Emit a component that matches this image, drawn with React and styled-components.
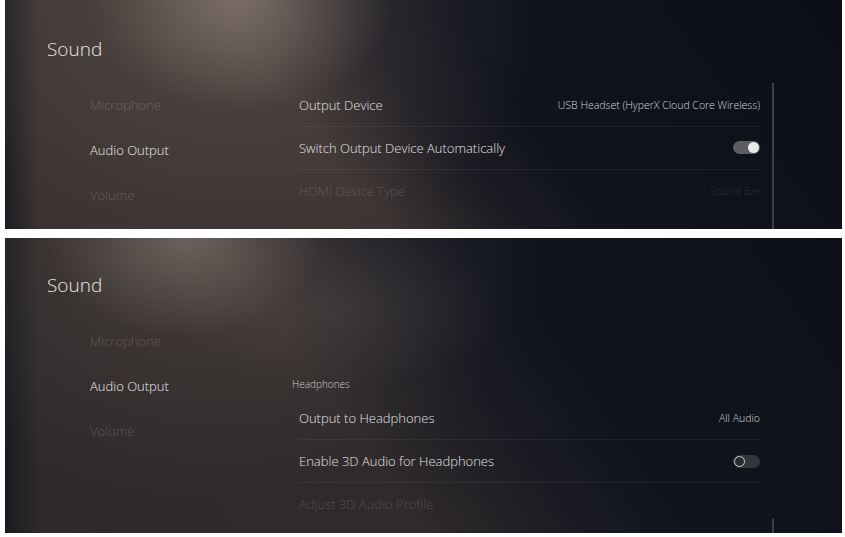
import styled, { createGlobalStyle } from "styled-components";

/* ---------- global ---------- */
const GlobalStyle = createGlobalStyle`
   html, body {
      margin: 0;
      padding: 0;
      background: #ffffff;
   }
   body {
      font-family: "Open Sans", "Noto Sans", sans-serif;
      font-weight: 300;
   }
`;

/* ---------- backgrounds ---------- */
const topBg = `
   radial-gradient(ellipse 150px 110px at 240px 0px, rgba(175,158,145,0.45), rgba(175,158,145,0) 100%),
   radial-gradient(ellipse 330px 260px at 215px 0px, rgba(120,106,98,0.35), rgba(120,106,98,0) 100%),
   linear-gradient(90deg, rgba(16,19,28,0.7) 0px, rgba(16,19,28,0) 34px),
   linear-gradient(53deg, #3a3331 0%, #3c3533 38%, #1d1c23 50%, #11141d 60%, #0c0f18 100%)
`;

const bottomBg = `
   radial-gradient(ellipse 140px 100px at 180px 0px, rgba(165,148,136,0.42), rgba(165,148,136,0) 100%),
   radial-gradient(ellipse 340px 260px at 200px 0px, rgba(112,100,94,0.3), rgba(112,100,94,0) 100%),
   radial-gradient(ellipse 170px 80px at 330px 70px, rgba(140,124,114,0.14), rgba(140,124,114,0) 100%),
   linear-gradient(90deg, rgba(16,19,28,0.7) 0px, rgba(16,19,28,0) 34px),
   linear-gradient(55deg, #2e2a2a 0%, #302b2b 40%, #1c1c23 54%, #12151e 64%, #0d1019 100%)
`;

/* ---------- layout ---------- */
const Page = styled.main`
   width: 845px;
   box-sizing: border-box;
   padding: 0 3px 4px 5px;
   display: flex;
   flex-direction: column;
   gap: 9px;
`;

const Panel = styled.section`
   height: ${({ $height }) => $height}px;
   box-sizing: border-box;
   padding-top: ${({ $top }) => $top}px;
   background: ${({ $bg }) => $bg};
   display: flex;
   flex-direction: column;
   overflow: hidden;
   color: #e4e4e4;
`;

const Title = styled.h1`
   margin: 0 0 0 42px;
   font-size: 19px;
   font-weight: 300;
   line-height: 24px;
   color: #e8e8e8;
`;

const Content = styled.div`
   flex: 1;
   display: flex;
   align-items: flex-start;
   margin-top: 21.5px;
   padding-left: 85px;
`;

const Menu = styled.nav`
   width: 209px;
   display: flex;
   flex-direction: column;
`;

const MenuItem = styled.div`
   height: 45px;
   line-height: 45px;
   font-size: 13px;
   color: ${({ $active }) => ($active ? "#ececec" : "rgba(255,255,255,0.2)")};
`;

const List = styled.div`
   width: 461px;
   margin-top: ${({ $offset }) => $offset}px;
   display: flex;
   flex-direction: column;
`;

const SectionHeader = styled.div`
   margin: 0 0 5px -7px;
   font-size: 10px;
   line-height: 16px;
   color: #cacaca;
`;

const Row = styled.div`
   height: 42px;
   display: flex;
   align-items: center;
   justify-content: space-between;
   border-bottom: 1px solid rgba(255, 255, 255, 0.06);
   &:last-child {
      border-bottom: none;
   }
`;

const Label = styled.span`
   font-size: 13px;
   color: ${({ $disabled }) => ($disabled ? "rgba(255,255,255,0.18)" : "#e2e2e2")};
`;

const Value = styled.span`
   font-size: 10.5px;
   color: ${({ $disabled }) => ($disabled ? "rgba(255,255,255,0.14)" : "#d6d6d6")};
`;

const Track = styled.span`
   width: 27px;
   height: 13px;
   box-sizing: border-box;
   padding: 1px;
   border-radius: 7px;
   display: flex;
   align-items: center;
   justify-content: ${({ $on }) => ($on ? "flex-end" : "flex-start")};
   background: ${({ $on }) => ($on ? "#5c5d63" : "#35363c")};
`;

const Knob = styled.span`
   width: 11px;
   height: 11px;
   box-sizing: border-box;
   border-radius: 50%;
   background: ${({ $on }) => ($on ? "#e9e9e9" : "#2b2c32")};
   border: ${({ $on }) => ($on ? "none" : "1.5px solid #cfcfcf")};
`;

const ScrollBar = styled.div`
   width: 2px;
   margin-left: 12px;
   margin-top: ${({ $from }) => $from}px;
   align-self: stretch;
   background: #3d4049;
`;

/* ---------- components ---------- */
function Toggle({ on }) {
   return (
      <Track $on={on}>
         <Knob $on={on} />
      </Track>
   );
}

const menu = ["Microphone", "Audio Output", "Volume"];

function SideMenu() {
   return (
      <Menu>
         {menu.map((item) => (
            <MenuItem key={item} $active={item === "Audio Output"}>
               {item}
            </MenuItem>
         ))}
      </Menu>
   );
}

function SettingRow({ label, value, toggle, disabled }) {
   return (
      <Row>
         <Label $disabled={disabled}>{label}</Label>
         {toggle !== undefined ? (
            <Toggle on={toggle} />
         ) : (
            <Value $disabled={disabled}>{value}</Value>
         )}
      </Row>
   );
}

export default function App() {
   return (
      <>
         <GlobalStyle />
         <Page>
            <Panel $height={229} $top={37} $bg={topBg}>
               <Title>Sound</Title>
               <Content>
                  <SideMenu />
                  <List $offset={1}>
                     <SettingRow
                        label="Output Device"
                        value="USB Headset (HyperX Cloud Core Wireless)"
                     />
                     <SettingRow label="Switch Output Device Automatically" toggle={true} />
                     <SettingRow label="HDMI Device Type" value="Sound Bar" disabled />
                  </List>
                  <ScrollBar $from={0} />
               </Content>
            </Panel>

            <Panel $height={295} $top={35} $bg={bottomBg}>
               <Title>Sound</Title>
               <Content>
                  <SideMenu />
                  <List $offset={57.5}>
                     <SectionHeader>Headphones</SectionHeader>
                     <SettingRow label="Output to Headphones" value="All Audio" />
                     <SettingRow label="Enable 3D Audio for Headphones" toggle={false} />
                     <SettingRow label="Adjust 3D Audio Profile" disabled />
                  </List>
                  <ScrollBar $from={200} />
               </Content>
            </Panel>
         </Page>
      </>
   );
}
